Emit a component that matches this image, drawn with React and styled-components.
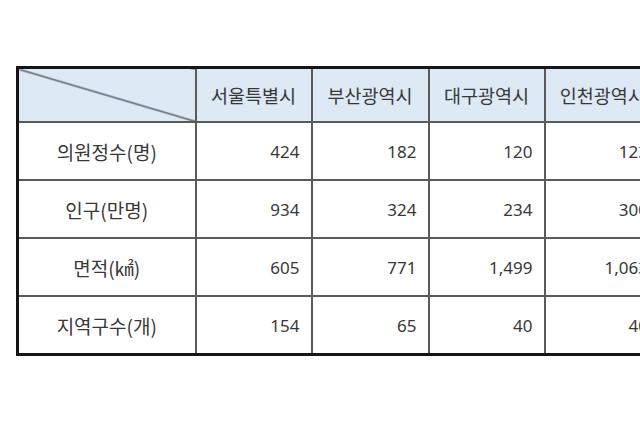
import React from "react"
import styled, { createGlobalStyle } from "styled-components"

const GlobalStyle = createGlobalStyle`
  html, body {
    margin: 0;
    padding: 0;
    background: #ffffff;
    overflow: hidden;
  }
`

const columns = [178, 116, 117, 116, 116]

const cities = ["서울특별시", "부산광역시", "대구광역시", "인천광역시"]

const rows = [
  { label: "의원정수(명)", values: ["424", "182", "120", "123"] },
  { label: "인구(만명)", values: ["934", "324", "234", "300"] },
  { label: "면적(㎢)", values: ["605", "771", "1,499", "1,063"] },
  { label: "지역구수(개)", values: ["154", "65", "40", "40"] },
]

const App = () => (
  <Page>
    <GlobalStyle />
    <Table>
      <colgroup>
        {columns.map((w, i) => (
          <Col key={i} $w={w} />
        ))}
      </colgroup>
      <thead>
        <tr>
          <CornerCell />
          {cities.map(city => (
            <HeadCell key={city}>{city}</HeadCell>
          ))}
        </tr>
      </thead>
      <tbody>
        {rows.map(row => (
          <tr key={row.label}>
            <LabelCell>{row.label}</LabelCell>
            {row.values.map((value, i) => (
              <NumberCell key={i}>{value}</NumberCell>
            ))}
          </tr>
        ))}
      </tbody>
    </Table>
  </Page>
)

export default App

const Page = styled.div`
  width: 640px;
  height: 426px;
  overflow: hidden;
  padding: 66px 0 0 16px;
  box-sizing: border-box;
`

const Table = styled.table`
  border-collapse: collapse;
  table-layout: fixed;
  width: 643px;
  border: 3px solid #151515;
  font-family: "Noto Sans", "Noto Sans CJK KR", sans-serif;
  color: #383838;
`

const Col = styled.col`
  width: ${props => props.$w}px;
`

const Cell = styled.td`
  border: 2px solid #5a5a5a;
  height: 56px;
  padding: 0 11px;
  font-size: 17px;
  line-height: 1;
  white-space: nowrap;
  overflow: hidden;
`

const HeadCell = styled(Cell).attrs({ as: "th" })`
  height: 52px;
  background: #dde9f5;
  font-weight: normal;
  text-align: center;
  font-family: "Noto Sans CJK KR", sans-serif;
  font-size: 18.5px;
  padding: 0;
`

const CornerCell = styled(HeadCell)`
  background:
    linear-gradient(
      to top right,
      transparent calc(50% - 1.2px),
      #3c3c3c 50%,
      transparent calc(50% + 1.2px)
    ),
    #dde9f5;
`

const LabelCell = styled(Cell)`
  text-align: center;
  font-family: "Noto Sans CJK KR", sans-serif;
  font-size: 19px;
  padding: 0;
`

const NumberCell = styled(Cell)`
  text-align: right;
`
